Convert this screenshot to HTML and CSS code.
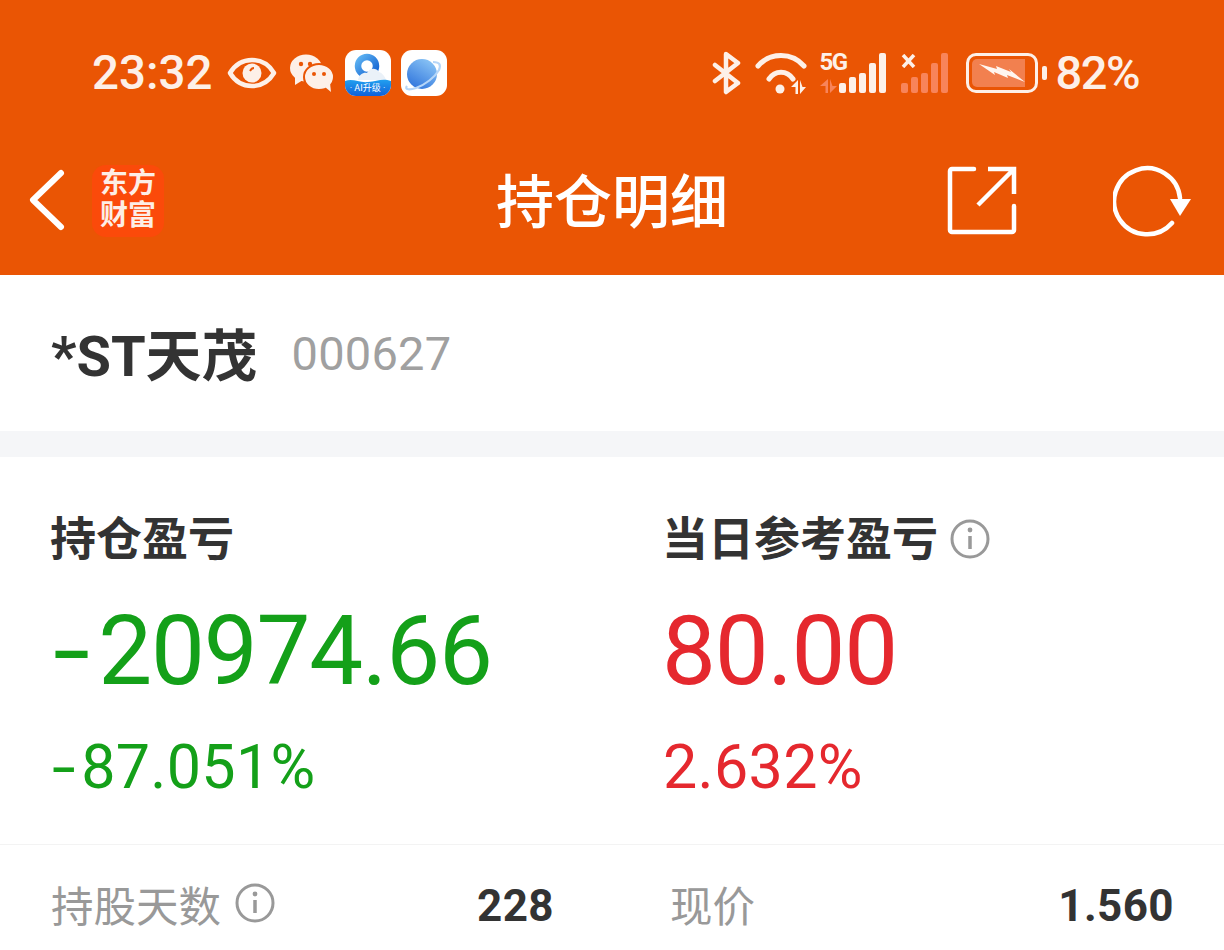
FILE: index.html
```html
<!DOCTYPE html>
<html lang="zh-CN">
<head>
  <meta charset="UTF-8">
  <title>持仓明细</title>
  <link rel="stylesheet" href="styles.css">
</head>
<body>
  <div class="phone">
    <div class="status-bar">
      <div class="status-left">
        <span class="time">23:32</span>
        <svg class="ic-eye" width="50" height="32" viewBox="0 0 50 32">
          <path d="M3 16C9 6 17 3 25 3s16 3 22 13c-6 10-14 13-22 13S9 26 3 16z" fill="none" stroke="#fdf0e8" stroke-width="4.5" stroke-linejoin="round"/>
          <circle cx="25" cy="16" r="9.5" fill="#fdf0e8"/>
          <path d="M23 14c1-2 2-3 4-3" fill="none" stroke="#ea5504" stroke-width="1.8"/>
        </svg>
        <svg class="ic-wechat" width="46" height="40" viewBox="0 0 46 40">
          <ellipse cx="17" cy="15" rx="16" ry="13.5" fill="#fdf0e8"/>
          <path d="M6 23l0 9 8-5z" fill="#fdf0e8"/>
          <ellipse cx="30" cy="24" rx="15" ry="13" fill="#fdf0e8" stroke="#ea5504" stroke-width="2"/>
          <path d="M36 34l6 5-1-9z" fill="#fdf0e8"/>
          <circle cx="12" cy="11" r="2.2" fill="#ea5504"/>
          <circle cx="21" cy="11" r="2.2" fill="#ea5504"/>
          <circle cx="25" cy="21" r="2" fill="#ea5504"/>
          <circle cx="35" cy="21" r="2" fill="#ea5504"/>
        </svg>
        <div class="app-icon app-qq">
          <svg width="46" height="46" viewBox="0 0 46 46">
            <defs>
              <linearGradient id="qqRing" x1="0" y1="0" x2="1" y2="1">
                <stop offset="0" stop-color="#5fb4f2"/>
                <stop offset="1" stop-color="#0f5fd0"/>
              </linearGradient>
              <linearGradient id="qqBand" x1="0" y1="0" x2="0" y2="1">
                <stop offset="0" stop-color="#22a0f0"/>
                <stop offset="1" stop-color="#1060d8"/>
              </linearGradient>
            </defs>
            <circle cx="22" cy="16" r="9" fill="none" stroke="url(#qqRing)" stroke-width="6.5"/>
            <path d="M13 30c1-6 6-8 9-7 2-5 9-6 12-1 3 1 6 4 7 8z" fill="#eaf1f8"/>
            <path d="M0 31c8-3 14 2 23 1s15-4 23-1v15H0z" fill="url(#qqBand)"/>
          </svg>
          <span class="app-label">· AI升级 ·</span>
        </div>
        <div class="app-icon">
          <svg width="46" height="46" viewBox="0 0 46 46">
            <defs>
              <linearGradient id="planet" x1="0.2" y1="1" x2="0.8" y2="0">
                <stop offset="0" stop-color="#2f74dc"/>
                <stop offset="1" stop-color="#8cc6f6"/>
              </linearGradient>
            </defs>
            <circle cx="21" cy="24" r="15" fill="url(#planet)"/>
            <path d="M6 36c-3 4 3 4 9 2 9-3 19-11 23-18 2-5 1-8-6-8" fill="none" stroke="#b6d6f8" stroke-width="2.2"/>
          </svg>
        </div>
      </div>
      <div class="status-right">
        <svg class="ic-bt" width="30" height="44" viewBox="0 0 30 44">
          <path d="M4 14l23 18-12 9V3l12 9L4 30" fill="none" stroke="#fdf0e8" stroke-width="4.5" stroke-linejoin="round" stroke-linecap="round"/>
        </svg>
        <svg class="ic-wifi" width="54" height="42" viewBox="0 0 54 42">
          <path d="M3 14C15 0 37 0 49 14" fill="none" stroke="#fdf0e8" stroke-width="5" stroke-linecap="round"/>
          <path d="M14 27C20 18 32 18 38 27" fill="none" stroke="#fdf0e8" stroke-width="5" stroke-linecap="round"/>
          <circle cx="25" cy="37" r="4.5" fill="#fdf0e8"/>
          <path d="M43 28v14h-2.500v-7H36zM45 28v14l6-7h-3.500z" fill="#fdf0e8"/>
        </svg>
        <div class="signal signal-5g">
          <span class="tag-5g">5G</span>
          <svg class="tag-arrows" width="18" height="14" viewBox="0 0 18 14"><path d="M8 0v14H5.500V7H0zM10 0v14l7-7h-4.500z" fill="#f8845a"/></svg>
          <div class="bars">
            <i class="b1"></i><i class="b2"></i><i class="b3"></i><i class="b4"></i><i class="b5"></i>
          </div>
        </div>
        <div class="signal signal-off">
          <svg class="tag-x" width="15" height="14" viewBox="0 0 15 14"><path d="M2 1l11 12M13 1L2 13" stroke="#fdf0e8" stroke-width="3.500"/></svg>
          <div class="bars">
            <i class="b1"></i><i class="b2"></i><i class="b3"></i><i class="b4"></i><i class="b5"></i>
          </div>
        </div>
        <div class="battery">
          <div class="battery-body">
            <div class="battery-fill"></div>
            <svg class="bolt" width="46" height="18" viewBox="0 0 46 18">
              <path d="M0 0l18 5-1-3 15 6-2-3 16 13-18-7 1 3-14-6 1 3z" fill="#fff6f0"/>
            </svg>
          </div>
          <div class="battery-cap"></div>
        </div>
        <span class="percent">82%</span>
      </div>
    </div>

    <div class="nav-bar">
      <div class="nav-left">
        <svg class="ic-back" width="40" height="64" viewBox="0 0 40 64">
          <path d="M33 5L5 32l28 27" fill="none" stroke="#fff" stroke-width="6" stroke-linecap="round" stroke-linejoin="round"/>
        </svg>
        <div class="logo">东方<br>财富</div>
      </div>
      <div class="nav-title">持仓明细</div>
      <div class="nav-right">
        <svg width="72" height="72" viewBox="0 0 72 72">
          <path d="M28 4H6a2 2 0 0 0-2 2v59a2 2 0 0 0 2 2h60a2 2 0 0 0 2-2V41" fill="none" stroke="#fff" stroke-width="4.500" stroke-linecap="round"/>
          <path d="M32 40L67 5M42 4h26v25" fill="none" stroke="#fff" stroke-width="4.500"/>
        </svg>
        <svg width="80" height="72" viewBox="0 0 80 72">
          <path d="M59 58A33 33 0 1 1 67 33" fill="none" stroke="#fff" stroke-width="4.500" stroke-linecap="round"/>
          <path d="M57 34h21L67 51z" fill="#fff"/>
        </svg>
      </div>
    </div>

    <div class="stock-row">
      <span class="stock-name">*ST天茂</span>
      <span class="stock-code">000627</span>
    </div>
    <div class="divider"></div>

    <div class="pnl">
      <div class="pnl-col">
        <div class="pnl-label">持仓盈亏</div>
        <div class="pnl-value green"><span class="minus">-</span>20974.66</div>
        <div class="pnl-rate green"><span class="minus">-</span>87.051%</div>
      </div>
      <div class="pnl-col">
        <div class="pnl-label">当日参考盈亏
          <svg class="info" width="40" height="40" viewBox="0 0 40 40">
            <circle cx="20" cy="20" r="18" fill="none" stroke="#999" stroke-width="3"/>
            <path d="M20 17v13" stroke="#999" stroke-width="3.500"/>
            <circle cx="20" cy="11" r="2.400" fill="#999"/>
          </svg>
        </div>
        <div class="pnl-value red">80.00</div>
        <div class="pnl-rate red rate-right">2.632%</div>
      </div>
    </div>

    <div class="detail">
      <div class="detail-cell">
        <span class="detail-label">持股天数
          <svg class="info" width="40" height="40" viewBox="0 0 40 40">
            <circle cx="20" cy="20" r="18" fill="none" stroke="#999" stroke-width="3"/>
            <path d="M20 17v13" stroke="#999" stroke-width="3.500"/>
            <circle cx="20" cy="11" r="2.400" fill="#999"/>
          </svg>
        </span>
        <span class="detail-value">228</span>
      </div>
      <div class="detail-cell cell-price">
        <span class="detail-label">现价</span>
        <span class="detail-value">1.560</span>
      </div>
    </div>
  </div>
</body>
</html>
```

FILE: styles.css
```css
html, body {
  margin: 0;
  padding: 0;
}
body {
  font-family: Roboto, "Noto Sans CJK SC", sans-serif;
  background-color: #fff;
  color: #333;
}
.phone {
  width: 1224px;
  height: 950px;
  overflow: hidden;
}
.status-bar {
  height: 145px;
  box-sizing: border-box;
  background-color: #ea5504;
  display: flex;
  justify-content: space-between;
  align-items: center;
  padding: 0 85px 0 92px;
}
.status-left, .status-right {
  display: flex;
  align-items: center;
}
.time {
  font-size: 47.500px;
  font-weight: 500;
  color: #fdf0e8;
  margin-right: 14px;
}
.ic-wechat {
  margin: 0 10px 0 12px;
}
.app-icon {
  width: 46px;
  height: 46px;
  border-radius: 11px;
  background-color: #fff;
  overflow: hidden;
  position: relative;
}
.app-qq {
  margin-right: 10px;
}
.app-icon svg {
  display: block;
}
.app-label {
  position: absolute;
  left: 0;
  right: 0;
  bottom: 2px;
  text-align: center;
  font-size: 9px;
  line-height: 11px;
  white-space: nowrap;
  color: #fff;
}
.status-right svg {
  display: block;
}
.ic-bt {
  margin-right: 14px;
}
.ic-wifi {
  margin-right: 10px;
}
.signal {
  position: relative;
  margin-right: 15px;
}
.signal-5g {
  padding-left: 20px;
}
.tag-5g {
  position: absolute;
  left: 0;
  top: -3px;
  font-size: 24px;
  line-height: 24px;
  font-weight: 700;
  color: #fdf0e8;
  letter-spacing: -1.500px;
}
.status-right .tag-arrows {
  position: absolute;
  left: 1px;
  bottom: 0;
}
.status-right .tag-x {
  position: absolute;
  left: 0;
  top: 1px;
}
.bars {
  display: flex;
  align-items: flex-end;
  gap: 3px;
  height: 40px;
}
.bars i {
  display: block;
  width: 7px;
  border-radius: 2px;
  background-color: #fdf0e8;
}
.signal-off {
  margin-right: 18px;
}
.signal-off .bars i {
  background-color: #f8845a;
}
.b1 { height: 10px; }
.b2 { height: 16px; }
.b3 { height: 20px; }
.b4 { height: 30px; }
.b5 { height: 40px; }
.battery {
  display: flex;
  align-items: center;
  margin-right: 8px;
}
.battery-body {
  width: 72px;
  height: 40px;
  box-sizing: border-box;
  border: 3px solid #fdf0e8;
  border-radius: 10px;
  padding: 3px;
  position: relative;
}
.battery-fill {
  width: 87%;
  height: 100%;
  background-color: #f2804f;
  border-radius: 5px 0 0 5px;
}
.status-right .bolt {
  position: absolute;
  left: 10px;
  top: 8px;
}
.battery-cap {
  width: 5px;
  height: 14px;
  margin-left: 4px;
  background-color: #fdf0e8;
  border-radius: 2px;
}
.percent {
  font-size: 47px;
  font-weight: 500;
  letter-spacing: -1.500px;
  color: #fdf0e8;
}
.nav-bar {
  height: 130px;
  box-sizing: border-box;
  background-color: #ea5504;
  display: flex;
  align-items: center;
  justify-content: space-between;
  padding: 0 31px 18px 28px;
  position: relative;
}
.nav-left, .nav-right {
  display: flex;
  align-items: center;
}
.nav-left {
  gap: 24px;
}
.ic-back {
  margin-top: -2px;
}
.nav-right {
  gap: 95px;
}
.logo {
  width: 72px;
  height: 72px;
  background-color: #fb4a0a;
  border-radius: 14px;
  color: #fdeee6;
  font-size: 28px;
  line-height: 32px;
  font-weight: 700;
  text-align: center;
  padding-top: 3px;
  box-sizing: border-box;
}
.nav-title {
  position: absolute;
  left: 0;
  right: 0;
  top: 22px;
  text-align: center;
  font-size: 58px;
  line-height: 72px;
  font-weight: 500;
  color: #fff;
}
.stock-row {
  height: 156px;
  box-sizing: border-box;
  display: flex;
  align-items: center;
  padding: 0 51px 4px;
  gap: 34px;
}
.stock-name {
  font-size: 56px;
  font-weight: 700;
  color: #333;
}
.stock-code {
  font-size: 47px;
  letter-spacing: 0.200px;
  color: #a0a0a0;
  padding-top: 5px;
}
.divider {
  height: 26px;
  background-color: #f5f6f8;
}
.pnl {
  display: flex;
  height: 388px;
  box-sizing: border-box;
  padding: 52px 0 0 52px;
  border-bottom: 1px solid #f3f3f3;
}
.pnl-col {
  flex: none;
  width: 610px;
}
.pnl-col:first-child .pnl-label {
  margin-left: -2px;
}
.pnl-label {
  display: flex;
  align-items: center;
  gap: 12px;
  font-size: 46px;
  line-height: 60px;
  font-weight: 700;
  color: #333;
}
.pnl-value {
  font-size: 96px;
  line-height: 112px;
  margin-top: 26px;
  letter-spacing: -1.200px;
}
.pnl-value .minus {
  margin: 0 20px 0 1px;
}
.pnl-rate {
  font-size: 61px;
  line-height: 66px;
  margin-top: 27px;
  letter-spacing: 0.300px;
}
.pnl-rate .minus {
  margin: 0 12px 0 0;
}
.rate-right {
  margin-left: 1px;
}
.minus {
  display: inline-block;
  transform: scaleX(1.400);
  transform-origin: left center;
}
.green {
  color: #14a019;
}
.red {
  color: #e5282e;
}
.detail {
  display: flex;
  padding: 28px 0 0 51px;
}
.detail-cell {
  display: flex;
  justify-content: space-between;
  align-items: center;
  width: 503px;
  height: 60px;
}
.cell-price {
  margin-left: 116px;
  width: 504px;
}
.detail-label {
  display: flex;
  align-items: center;
  gap: 14px;
  font-size: 42.500px;
  color: #999;
}
.detail-value {
  font-size: 44px;
  font-weight: 700;
  letter-spacing: 0.400px;
  padding-top: 5px;
  color: #333;
}
```
